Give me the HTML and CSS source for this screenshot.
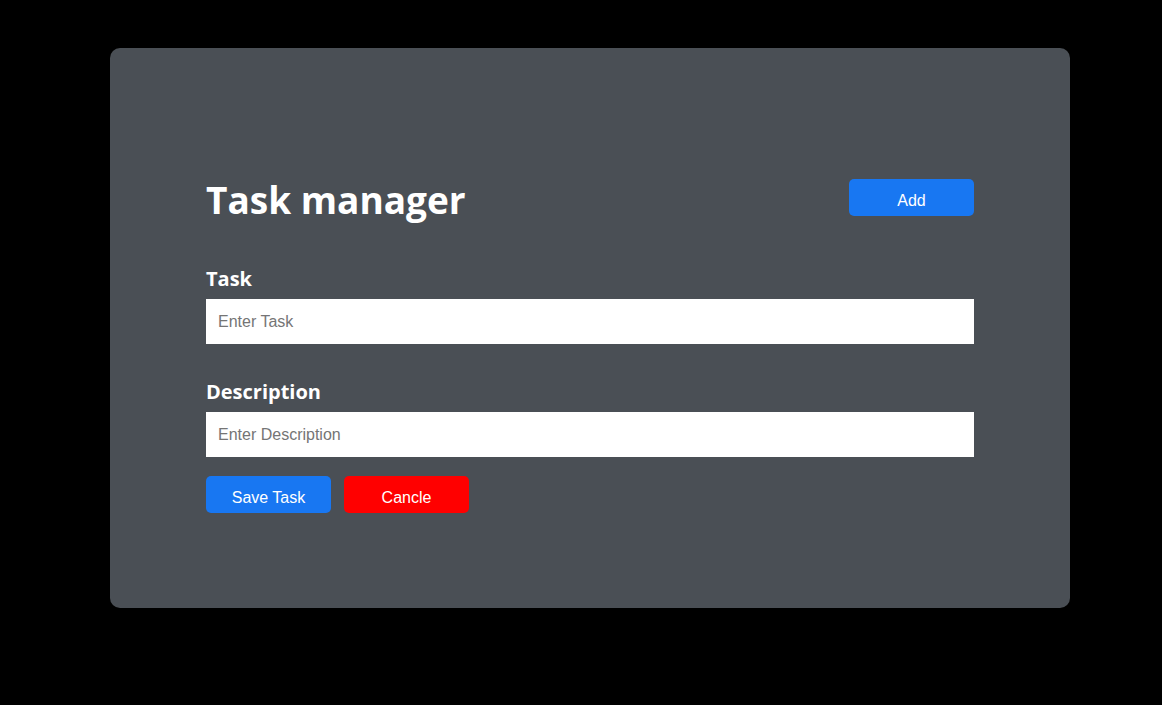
FILE: index.html
```html
<!DOCTYPE html>
<html lang="en">
<head>
<meta charset="utf-8">
<title>Task manager</title>
<link rel="stylesheet" href="styles.css">
</head>
<body>
<div class="card">
  <div class="header">
    <h1 class="title">Task manager</h1>
    <button class="btn btn-blue">Add</button>
  </div>
  <form class="form">
    <label class="label" for="task">Task</label>
    <input class="input" id="task" type="text" placeholder="Enter Task">
    <label class="label label-desc" for="desc">Description</label>
    <input class="input" id="desc" type="text" placeholder="Enter Description">
    <div class="actions">
      <button type="button" class="btn btn-blue">Save Task</button>
      <button type="button" class="btn btn-red">Cancle</button>
    </div>
  </form>
</div>
</body>
</html>
```

FILE: styles.css
```css
* { box-sizing: border-box; }
html, body { margin: 0; padding: 0; }
body {
  background: #000;
  width: 1162px;
  height: 705px;
  padding-top: 48px;
  font-family: "Liberation Sans", Arial, sans-serif;
}
.card {
  width: 960px;
  height: 560px;
  margin-left: 110px;
  background: #4a4f55;
  border-radius: 10px;
  padding: 131px 96px 0;
}
.header {
  display: flex;
  justify-content: space-between;
  align-items: center;
  height: 37px;
}
.title {
  margin: 0;
  padding-top: 4px;
  font-family: "Open Sans", "Noto Sans", sans-serif;
  font-weight: 700;
  font-size: 37px;
  line-height: 37px;
  color: #fff;
}
.btn {
  width: 125px;
  height: 37px;
  border: none;
  border-radius: 5px;
  color: #fff;
  font-family: "Liberation Sans", Arial, sans-serif;
  font-size: 16px;
  padding: 6px 0 0;
  cursor: pointer;
}
.btn-blue { background: #1877f2; }
.btn-red { background: #ff0000; }
.form {
  display: flex;
  flex-direction: column;
  padding-top: 50px;
}
.label {
  font-family: "Open Sans", "Noto Sans", sans-serif;
  font-weight: 700;
  font-size: 20px;
  line-height: 26px;
  color: #fff;
  margin-bottom: 7px;
}
.label-desc { margin-top: 35px; }
.input {
  width: 768px;
  height: 45px;
  border: none;
  background: #fff;
  padding: 0 12px;
  font-family: "Liberation Sans", Arial, sans-serif;
  font-size: 16px;
  color: #333;
  outline: none;
}
.input::placeholder { color: #757575; }
.actions {
  display: flex;
  gap: 13px;
  margin-top: 19px;
}
```
